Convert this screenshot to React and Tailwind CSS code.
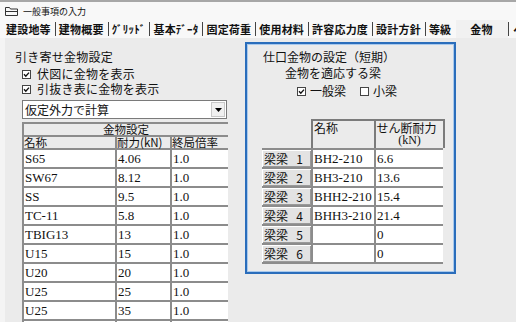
import React from "react";

const tabs = ["建設地等", "建物概要", "ｸﾞﾘｯﾄﾞ", "基本ﾃﾞｰﾀ", "固定荷重", "使用材料", "許容応力度", "設計方針", "等級"];

const kanamono = [
  ["S65", "4.06", "1.0"],
  ["SW67", "8.12", "1.0"],
  ["SS", "9.5", "1.0"],
  ["TC-11", "5.8", "1.0"],
  ["TBIG13", "13", "1.0"],
  ["U15", "15", "1.0"],
  ["U20", "20", "1.0"],
  ["U25", "25", "1.0"],
  ["U25", "35", "1.0"],
  ["S-S25", "3.18", "1.0"],
];

const shiguchi = [
  ["BH2-210", "6.6"],
  ["BH3-210", "13.6"],
  ["BHH2-210", "15.4"],
  ["BHH3-210", "21.4"],
  ["", "0"],
  ["", "0"],
];

function Check({ checked }) {
  return (
    <svg width="9" height="9" viewBox="0 0 9 9" className="shrink-0">
      <rect x="0.5" y="0.5" width="8" height="8" fill="#fff" stroke="#444" />
      {checked && <path d="M2 4.3 L3.8 6.2 L7 2.6" fill="none" stroke="#111" strokeWidth="1.4" />}
    </svg>
  );
}

export default function App() {
  return (
    <div className="w-[516px] h-[322px] overflow-hidden bg-[#ebebeb] flex flex-col font-['Noto_Sans_CJK_JP','Noto_Sans',sans-serif] text-[#111]">
      {/* title bar */}
      <div className="h-[20px] shrink-0 border-t-2 border-[#a7a7a7] bg-[#f8f8f8] flex items-center pl-[5px]">
        <svg width="13" height="10" viewBox="0 0 13 10" fill="none" stroke="#333" strokeWidth="1">
          <path d="M0.5 1.5 h4 l1 1.5 h7 v6.5 h-12 z" />
          <path d="M0.5 5.5 h12" />
        </svg>
        <span className="ml-[5px] text-[9px] leading-none">一般事項の入力</span>
      </div>

      {/* tab row */}
      <div className="h-[18px] shrink-0 flex items-center bg-[#f8f8f8] pl-[6px] text-[11px] font-bold tracking-[0.2px] whitespace-nowrap overflow-hidden">
        {tabs.map((t, i) => (
          <React.Fragment key={t}>
            {i > 0 && <span className="w-px h-[14px] bg-[#444] ml-[4px] mr-[3px] shrink-0" />}
            <span className="leading-none shrink-0">{t}</span>
          </React.Fragment>
        ))}
        <div className="ml-[5px] h-full w-[52px] shrink-0 bg-[#f1f1f1] flex items-center pl-[14px] leading-none">金物</div>
        <span className="w-px h-[14px] bg-[#444] shrink-0" />
        <span className="ml-[4px] leading-none shrink-0">ベ</span>
      </div>

      {/* content */}
      <div className="flex-1 min-h-0 flex border-l-[5px] border-[#f4f4f4] overflow-hidden">
        {/* left column */}
        <div className="w-[240px] shrink-0 flex flex-col pt-[12px]">
          <div className="shrink-0 h-[14px] leading-[14px] text-[12px] tracking-[0.25px] pl-[10px]">引き寄せ金物設定</div>
          <div className="shrink-0 mt-[3px] h-[14px] flex items-center gap-[6px] pl-[17px] text-[12px] tracking-[0.25px] leading-none">
            <Check checked />
            <span>伏図に金物を表示</span>
          </div>
          <div className="shrink-0 mt-[1px] h-[14px] flex items-center gap-[6px] pl-[17px] text-[12px] tracking-[0.25px] leading-none">
            <Check checked />
            <span>引抜き表に金物を表示</span>
          </div>
          <div className="shrink-0 mt-[4px] ml-[17px] w-[205px] h-[19px] bg-white border border-[#7a7a7a] flex items-center justify-between">
            <span className="pl-[2px] text-[12px] leading-none">仮定外力で計算</span>
            <div className="w-[14px] h-[15px] mr-[1px] bg-[#f0f0f0] border border-[#c8c8c8] flex items-center justify-center">
              <svg width="7" height="4" viewBox="0 0 7 4">
                <path d="M0 0 H7 L3.5 4 Z" fill="#000" />
              </svg>
            </div>
          </div>
          <div className="shrink-0 mt-[3px] ml-[17px] w-[206px] bg-[#8c8c8c] pt-[2px] pl-[2px] grid grid-cols-[91px_53px_56px] gap-[2px]">
            <div className="col-span-3 h-[11px] bg-[#ebebeb] text-center text-[11.5px] leading-[11px]">金物設定</div>
            <div className="h-[11px] bg-[#ebebeb] text-[11.5px] leading-[11px] whitespace-nowrap">名称</div>
            <div className="h-[11px] bg-[#ebebeb] text-[11.5px] leading-[11px] whitespace-nowrap">耐力(kN)</div>
            <div className="h-[11px] bg-[#ebebeb] text-[11.5px] leading-[11px] whitespace-nowrap">終局倍率</div>
            {kanamono.map((r, i) => (
              <React.Fragment key={i}>
                {r.map((c, j) => (
                  <div key={j} className="h-[17px] bg-white pl-[1px] font-['Liberation_Serif',serif] text-[13px] leading-[17px] whitespace-nowrap">
                    {c}
                  </div>
                ))}
              </React.Fragment>
            ))}
          </div>
        </div>

        {/* right box */}
        <div className="mt-[4px] w-[211px] h-[232px] shrink-0 border-2 border-[#2a6dbb]">
          <div className="h-full border border-[#a9c9ec] flex flex-col">
            <div className="shrink-0 mt-[5px] pl-[15px] h-[14px] leading-[14px] text-[12px]">仕口金物の設定（短期）</div>
            <div className="shrink-0 mt-[2px] pl-[37px] h-[14px] leading-[14px] text-[12px]">金物を適応する梁</div>
            <div className="shrink-0 mt-[4px] pl-[49px] h-[14px] flex items-center text-[12px] leading-none">
              <Check checked />
              <span className="ml-[4px]">一般梁</span>
              <span className="ml-[14px] flex"><Check /></span>
              <span className="ml-[4px]">小梁</span>
            </div>
            <div className="shrink-0 mt-[21px] pl-[14px] flex flex-col">
              <div className="flex h-[29px]">
                <div className="w-[49px] shrink-0" />
                <div className="w-[63px] shrink-0 border-l-2 border-t-2 border-[#7b7b7b] bg-[#ebebeb] pl-[1px] text-[12px] leading-[13px]">名称</div>
                <div className="w-[71px] shrink-0 border-l-2 border-t-2 border-r-2 border-[#7b7b7b] bg-[#ebebeb] flex flex-col items-center text-[12px] leading-[12px] pt-[1px]">
                  <span className="-ml-[6px]">せん断耐力</span>
                  <span className="font-['Liberation_Serif',serif] text-[12px] leading-[12px]">(kN)</span>
                </div>
              </div>
              <div className="w-[181px] bg-[#8c8c8c] py-[2px] grid grid-cols-[49px_61px_67px] gap-[2px]">
                {shiguchi.map((r, i) => (
                  <React.Fragment key={i}>
                    <div className="h-[17px] bg-[#e3e3e3] border-t border-l border-white shadow-[inset_-1px_-1px_0_#9a9a9a] flex items-center justify-between pl-[1px] pr-[8px] text-[12px] leading-none">
                      <span>梁梁</span>
                      <span>{i + 1}</span>
                    </div>
                    <div className="h-[17px] bg-white pl-[1px] font-['Liberation_Serif',serif] text-[13px] leading-[17px] whitespace-nowrap">{r[0]}</div>
                    <div className="h-[17px] bg-white pl-[1px] font-['Liberation_Serif',serif] text-[13px] leading-[17px] whitespace-nowrap">{r[1]}</div>
                  </React.Fragment>
                ))}
              </div>
            </div>
          </div>
        </div>
      </div>
    </div>
  );
}
